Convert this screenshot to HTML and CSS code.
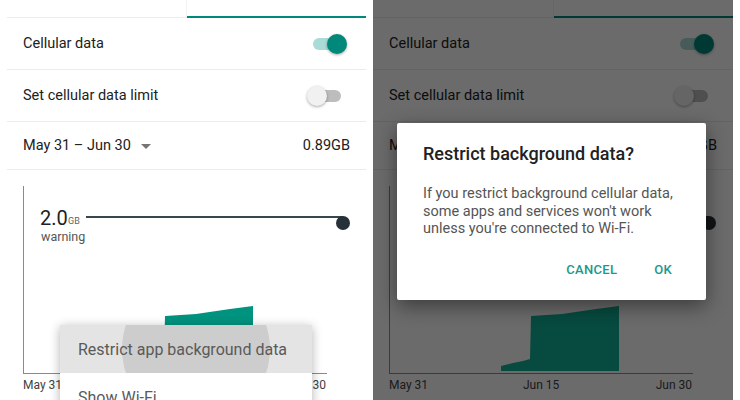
FILE: index.html
```html
<!DOCTYPE html>
<html lang="en">
<head>
  <meta charset="UTF-8">
  <title>Restrict background data</title>
  <link rel="stylesheet" href="styles.css">
</head>
<body>
  <div class="screens">

    <!-- left: overflow menu open -->
    <div class="screen">
      <div class="tabs"><div class="tab"></div><div class="tab on"></div></div>
      <div class="row"><span>Cellular data</span><span class="sw on"><i class="track"></i><i class="thumb"></i></span></div>
      <div class="row"><span>Set cellular data limit</span><span class="sw"><i class="track"></i><i class="thumb"></i></span></div>
      <div class="row date"><span>May 31 – Jun 30<i class="caret"></i></span><span>0.89GB</span></div>
      <svg class="chart" width="359" height="231" viewBox="0 0 359 231">
        <polygon class="usage" points="128,201 128,196 140,193 150,191 157,189 158,146 189,144 223,139 246,136 246,201"/>
        <line class="axis" x1="16.5" y1="16" x2="16.5" y2="203.5"/>
        <line class="axis" x1="16" y1="203.5" x2="320" y2="203.5"/>
        <line class="limit" x1="79" y1="47" x2="336" y2="47"/>
        <circle class="knob" cx="336" cy="53" r="7"/>
        <text class="big" x="33" y="55">2.0</text>
        <text class="unit" x="61" y="54">GB</text>
        <text class="warn" x="34" y="71">warning</text>
        <text class="lbl" x="16" y="219">May 31</text>
        <text class="lbl" x="150" y="219">Jun 15</text>
        <text class="lbl" x="319" y="219" text-anchor="end">Jun 30</text>
      </svg>
      <div class="menu">
        <div class="item pressed"><span class="ripple"></span><span class="label">Restrict app background data</span></div>
        <div class="item"><span class="label">Show Wi-Fi</span></div>
      </div>
    </div>

    <!-- right: confirm dialog -->
    <div class="screen dim">
      <div class="tabs"><div class="tab"></div><div class="tab on"></div></div>
      <div class="row"><span>Cellular data</span><span class="sw on"><i class="track"></i><i class="thumb"></i></span></div>
      <div class="row"><span>Set cellular data limit</span><span class="sw"><i class="track"></i><i class="thumb"></i></span></div>
      <div class="row date"><span>May 31 – Jun 30<i class="caret"></i></span><span>0.89GB</span></div>
      <svg class="chart" width="359" height="231" viewBox="0 0 359 231">
        <polygon class="usage" points="128,201 128,196 140,193 150,191 157,189 158,146 189,144 223,139 246,136 246,201"/>
        <line class="axis" x1="16.5" y1="16" x2="16.5" y2="203.5"/>
        <line class="axis" x1="16" y1="203.5" x2="320" y2="203.5"/>
        <line class="limit" x1="79" y1="47" x2="336" y2="47"/>
        <circle class="knob" cx="336" cy="53" r="7"/>
        <text class="big" x="33" y="55">2.0</text>
        <text class="unit" x="61" y="54">GB</text>
        <text class="warn" x="34" y="71">warning</text>
        <text class="lbl" x="16" y="219">May 31</text>
        <text class="lbl" x="150" y="219">Jun 15</text>
        <text class="lbl" x="319" y="219" text-anchor="end">Jun 30</text>
      </svg>
      <div class="scrim"></div>
      <div class="dialog">
        <h2>Restrict background data?</h2>
        <p>If you restrict background cellular data, some apps and services won't work unless you're connected to Wi-Fi.</p>
        <div class="actions"><span>CANCEL</span><span>OK</span></div>
      </div>
    </div>

  </div>
</body>
</html>
```

FILE: styles.css
```css
body {
  margin: 0;
  background: #fff;
  font-family: Roboto, "Noto Sans", sans-serif;
  color: #212121;
}
.screens {
  display: flex;
  gap: 7px;
  padding-left: 7px;
}
.screen {
  position: relative;
  width: 360px;
  height: 400px;
  overflow: hidden;
  background: #fff;
}
.screen:first-child {
  width: 359px;
}
.tabs {
  display: flex;
  height: 17px;
  border-bottom: 1px solid #ececec;
}
.tab {
  flex: 1;
}
.tab:first-child {
  border-right: 1px solid #f2f2f2;
}
.tab.on {
  border-bottom: 2px solid #00897b;
  margin-bottom: -1px;
  border-right: none;
}
.row {
  display: flex;
  align-items: center;
  justify-content: space-between;
  height: 51px;
  padding: 0 19px 0 16px;
  border-bottom: 1px solid #ececec;
  font-size: 14.5px;
}
.row.date {
  height: 47px;
  padding-right: 16px;
}
.caret {
  display: inline-block;
  margin-left: 10px;
  vertical-align: middle;
  border-left: 5px solid transparent;
  border-right: 5px solid transparent;
  border-top: 5px solid #757575;
}
.sw {
  position: relative;
  width: 40px;
  height: 20px;
}
.sw i {
  position: absolute;
}
.track {
  left: 6px;
  right: 6px;
  top: 4px;
  height: 12px;
  border-radius: 6px;
  background: #bdbdbd;
}
.thumb {
  left: 0;
  top: 0;
  width: 20px;
  height: 20px;
  border-radius: 50%;
  background: #f1f1f1;
  box-shadow: 0 1px 3px rgba(0,0,0,0.35);
}
.sw.on .track {
  background: #a9dcd6;
}
.sw.on .thumb {
  left: auto;
  right: 0;
  background: #00897b;
}
.chart {
  display: block;
}
.chart text {
  font-family: Roboto, sans-serif;
}
.usage {
  fill: #00937f;
}
.dim .usage {
  fill: #12b096;
}
.axis {
  stroke: #8a8a8a;
  stroke-width: 1;
}
.limit {
  stroke: #37474f;
  stroke-width: 2;
}
.knob {
  fill: #263238;
}
.big {
  font-size: 20px;
  fill: #212121;
}
.unit {
  font-size: 9px;
  fill: #616161;
}
.warn {
  font-size: 12.5px;
  fill: #555;
}
.lbl {
  font-size: 12px;
  fill: #424242;
}
.menu {
  position: absolute;
  left: 53px;
  top: 325px;
  width: 252px;
  background: #fff;
  box-shadow: 0 2px 10px rgba(0,0,0,0.3);
}
.item {
  position: relative;
  height: 48px;
  display: flex;
  align-items: center;
  padding-left: 18px;
  font-size: 16px;
  color: #5a5a5a;
  overflow: hidden;
}
.item.pressed {
  background: #e4e4e4;
}
.ripple {
  position: absolute;
  left: 62px;
  top: -50px;
  width: 148px;
  height: 148px;
  border-radius: 50%;
  background: #cdcdcd;
}
.label {
  position: relative;
}
.scrim {
  position: absolute;
  inset: 0;
  background: rgba(0,0,0,0.58);
}
.dialog {
  position: absolute;
  left: 24px;
  top: 123px;
  width: 309px;
  height: 177px;
  box-sizing: border-box;
  padding: 20px 25px 0 26px;
  background: #fff;
  border-radius: 2px;
  box-shadow: 0 6px 20px rgba(0,0,0,0.45);
}
.dialog h2 {
  margin: 0;
  font-size: 18px;
  font-weight: 500;
  color: #212121;
}
.dialog p {
  margin: 21px 0 0;
  font-size: 14.5px;
  line-height: 17.5px;
  color: #555;
}
.actions {
  display: flex;
  justify-content: flex-end;
  gap: 37px;
  margin-top: 24px;
  padding-right: 9px;
  font-size: 13px;
  font-weight: 500;
  color: #1a998b;
  letter-spacing: 0.3px;
}
```
